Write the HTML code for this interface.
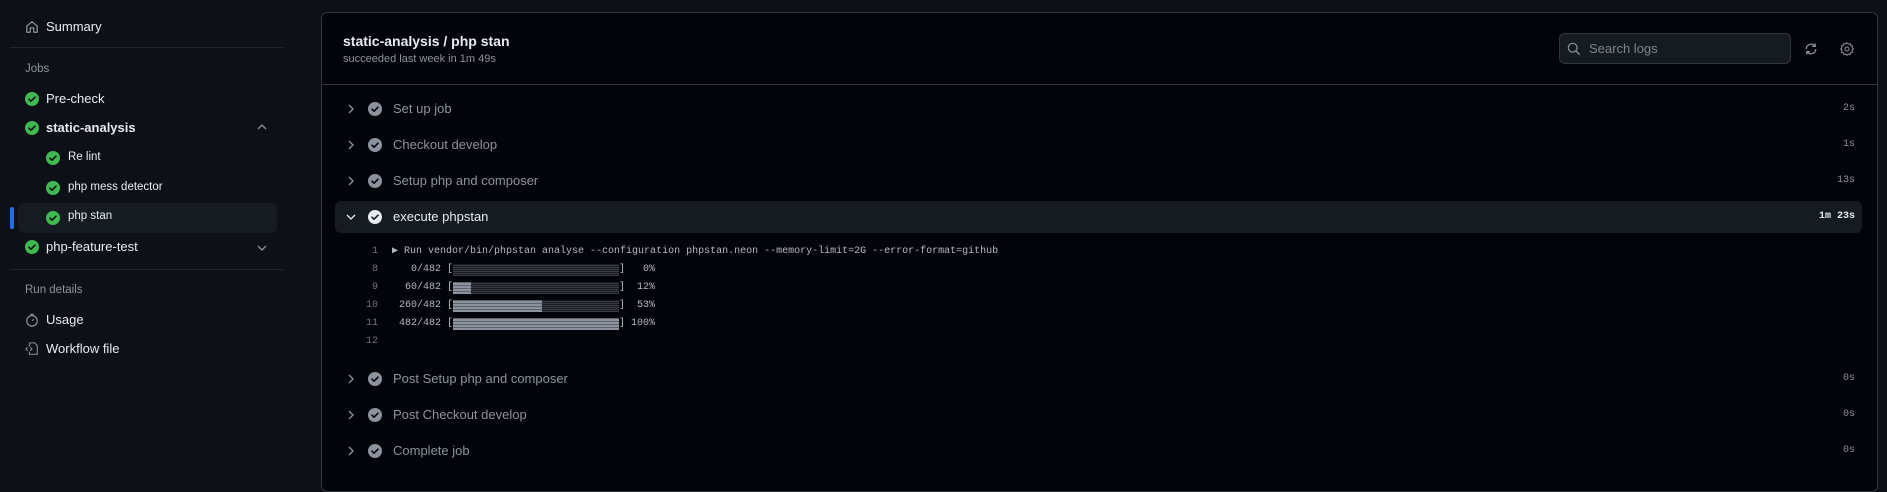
<!DOCTYPE html>
<html><head><meta charset="utf-8"><style>
*{box-sizing:border-box;margin:0;padding:0}
body{width:1887px;height:487px;background:#0d1117;font-family:"Liberation Sans",sans-serif;color:#e6edf3;position:relative;overflow:hidden}
.a{position:absolute;white-space:nowrap}
.sb{font-size:13px;color:#e6edf3}
.sm{font-size:11.5px;color:#8b949e}
.hr{position:absolute;height:1px;background:#21262d}
.panel{position:absolute;left:321px;top:12px;width:1557px;height:480px;background:#010409;border:1px solid #30363d;border-radius:6px}
.step{font-size:13px;color:#8b949e}
.t{font-family:"Liberation Mono","DejaVu Sans Mono",monospace;font-size:10px;color:#8b949e;text-align:right;width:60px}
.log{font-family:"Liberation Mono","DejaVu Sans Mono",monospace;font-size:10px;line-height:12px;color:#b1bac4}
.ln{font-family:"Liberation Mono",monospace;font-size:10px;line-height:12px;color:#6e7681;text-align:right;width:30px}
.bar{position:absolute;height:12px;background:repeating-linear-gradient(0deg,#3a3f45 0 1px,#15181c 1px 2px)}
.fill{position:absolute;height:12px;background:repeating-linear-gradient(0deg,#8b949e 0 2px,#5d646c 2px 3px)}
</style></head><body>
<svg class="a" style="left:25px;top:20px" width="14" height="14" viewBox="0 0 16 16"><path d="M2 7 8 2l6 5v7H10V9H6v5H2z" fill="none" stroke="#8b949e" stroke-width="1.4" stroke-linejoin="round"/></svg>
<div class="a sb" style="left:46px;top:19px">Summary</div>
<div class="hr" style="left:10px;top:47px;width:274px"></div>
<div class="a sm" style="left:25px;top:63px">Jobs</div>
<svg width="0" height="0" style="position:absolute"><defs><g id="ok"><circle cx="7" cy="7" r="7" fill="#3fb950"/><path d="M4 7.2l2 2 4-4" fill="none" stroke="#0d1117" stroke-width="1.6" stroke-linecap="round" stroke-linejoin="round"/></g><g id="gk"><circle cx="7" cy="7" r="7" fill="#8b949e"/><path d="M4 7.2l2 2 4-4" fill="none" stroke="#010409" stroke-width="1.6" stroke-linecap="round" stroke-linejoin="round"/></g><g id="wk"><circle cx="7" cy="7" r="7" fill="#e6edf3"/><path d="M4 7.2l2 2 4-4" fill="none" stroke="#161b22" stroke-width="1.6" stroke-linecap="round" stroke-linejoin="round"/></g></defs></svg>
<svg class="a" style="left:25px;top:92px" width="14" height="14"><use href="#ok"/></svg>
<div class="a sb" style="left:46px;top:91px">Pre-check</div>
<svg class="a" style="left:25px;top:121px" width="14" height="14"><use href="#ok"/></svg>
<div class="a sb" style="left:46px;top:120px;font-weight:bold">static-analysis</div>
<svg class="a" style="left:257px;top:123px" width="10" height="8"><path d="M1 6l4-4 4 4" fill="none" stroke="#8b949e" stroke-width="1.3"/></svg>
<svg class="a" style="left:46px;top:151px" width="14" height="14"><use href="#ok"/></svg>
<div class="a" style="left:68px;top:151px;font-size:11.5px">Re lint</div>
<svg class="a" style="left:46px;top:181px" width="14" height="14"><use href="#ok"/></svg>
<div class="a" style="left:68px;top:181px;font-size:11.5px">php mess detector</div>
<div class="a" style="left:18px;top:203px;width:259px;height:30px;background:#161b22;border-radius:6px"></div>
<div class="a" style="left:10px;top:207px;width:4px;height:22px;background:#1f6feb;border-radius:2px"></div>
<svg class="a" style="left:46px;top:211px" width="14" height="14"><use href="#ok"/></svg>
<div class="a" style="left:68px;top:210px;font-size:11.5px">php stan</div>
<svg class="a" style="left:25px;top:240px" width="14" height="14"><use href="#ok"/></svg>
<div class="a sb" style="left:46px;top:239px">php-feature-test</div>
<svg class="a" style="left:257px;top:244px" width="10" height="8"><path d="M1 2l4 4 4-4" fill="none" stroke="#8b949e" stroke-width="1.3"/></svg>
<div class="hr" style="left:10px;top:269px;width:274px"></div>
<div class="a sm" style="left:25px;top:284px">Run details</div>
<svg class="a" style="left:25px;top:313px" width="14" height="14" viewBox="0 0 16 16"><circle cx="8" cy="9" r="6" fill="none" stroke="#8b949e" stroke-width="1.3"/><path d="M6 1.5h4M8 9l2-2" stroke="#8b949e" stroke-width="1.3"/></svg>
<div class="a sb" style="left:46px;top:312px">Usage</div>
<svg class="a" style="left:25px;top:342px" width="14" height="14" viewBox="0 0 16 16"><path d="M5 1h6l3 3v10H5v-3M5 5V1" fill="none" stroke="#8b949e" stroke-width="1.2"/><path d="M3 6L1 8l2 2M6 6l2 2-2 2" fill="none" stroke="#8b949e" stroke-width="1.2"/></svg>
<div class="a sb" style="left:46px;top:341px">Workflow file</div>

<div class="panel"></div>
<div class="a" style="left:343px;top:33px;font-size:14px;font-weight:bold;color:#e6edf3">static-analysis / php stan</div>
<div class="a" style="left:343px;top:53px;font-size:11px;color:#8b949e">succeeded last week in 1m 49s</div>
<div class="a" style="left:1559px;top:33px;width:232px;height:31px;background:#161b22;border:1px solid #30363d;border-radius:6px"></div>
<svg class="a" style="left:1567px;top:42px" width="14" height="14" viewBox="0 0 16 16"><circle cx="6.5" cy="6.5" r="5" fill="none" stroke="#8b949e" stroke-width="1.4"/><path d="M10.3 10.3L14.5 14.5" stroke="#8b949e" stroke-width="1.5"/></svg>
<div class="a" style="left:1589px;top:41px;font-size:13px;color:#7d8590">Search logs</div>
<svg class="a" style="left:1804px;top:42px" width="14" height="14" viewBox="0 0 16 16"><path d="M2.5 8a5.5 5.5 0 0 1 9.7-3.5M13.5 8a5.5 5.5 0 0 1-9.7 3.5" fill="none" stroke="#8b949e" stroke-width="1.4"/><path d="M12.8 1.5v3.5H9.3M3.2 14.5V11h3.5" fill="none" stroke="#8b949e" stroke-width="1.4"/></svg>
<svg class="a" style="left:1840px;top:42px" width="14" height="14" viewBox="0 0 16 16"><path d="M8 .8l1.5 1.6 2.1-.5.6 2.1 2.1.6-.5 2.1L15.2 8l-1.4 1.5.5 2.1-2.1.6-.6 2.1-2.1-.5L8 15.2l-1.5-1.4-2.1.5-.6-2.1-2.1-.6.5-2.1L.8 8l1.4-1.5-.5-2.1 2.1-.6.6-2.1 2.1.5z" fill="none" stroke="#8b949e" stroke-width="1.2" stroke-linejoin="round"/><circle cx="8" cy="8" r="2.3" fill="none" stroke="#8b949e" stroke-width="1.2"/></svg>
<div class="hr" style="left:322px;top:84px;width:1555px;background:#30363d"></div>

<div class="a" style="left:335px;top:201px;width:1527px;height:32px;background:#161b22;border-radius:6px"></div>

<svg class="a" style="left:347px;top:104px" width="8" height="10"><path d="M2 1l4 4-4 4" fill="none" stroke="#8b949e" stroke-width="1.3"/></svg>
<svg class="a" style="left:368px;top:102px" width="14" height="14"><use href="#gk"/></svg>
<div class="a step" style="left:393px;top:101px">Set up job</div>
<div class="a t" style="left:1795px;top:103px">2s</div>
<svg class="a" style="left:347px;top:140px" width="8" height="10"><path d="M2 1l4 4-4 4" fill="none" stroke="#8b949e" stroke-width="1.3"/></svg>
<svg class="a" style="left:368px;top:138px" width="14" height="14"><use href="#gk"/></svg>
<div class="a step" style="left:393px;top:137px">Checkout develop</div>
<div class="a t" style="left:1795px;top:139px">1s</div>
<svg class="a" style="left:347px;top:176px" width="8" height="10"><path d="M2 1l4 4-4 4" fill="none" stroke="#8b949e" stroke-width="1.3"/></svg>
<svg class="a" style="left:368px;top:174px" width="14" height="14"><use href="#gk"/></svg>
<div class="a step" style="left:393px;top:173px">Setup php and composer</div>
<div class="a t" style="left:1795px;top:175px">13s</div>
<svg class="a" style="left:346px;top:213px" width="10" height="8"><path d="M1 2l4 4 4-4" fill="none" stroke="#e6edf3" stroke-width="1.3"/></svg>
<svg class="a" style="left:368px;top:210px" width="14" height="14"><use href="#wk"/></svg>
<div class="a step" style="left:393px;top:209px;color:#e6edf3">execute phpstan</div>
<div class="a t" style="left:1795px;top:211px;color:#e6edf3;font-weight:bold">1m 23s</div>

<div class="a ln" style="left:348px;top:246px">1</div>
<div class="a log" style="left:392px;top:246px">▶ Run vendor/bin/phpstan analyse --configuration phpstan.neon --memory-limit=2G --error-format=github</div>
<div class="a ln" style="left:348px;top:264px">8</div>
<div class="a log" style="left:399px;top:264px">&nbsp;&nbsp;0/482 [</div><div class="a log" style="left:619px;top:264px">]&nbsp;&nbsp;&nbsp;0%</div>
<div class="bar" style="left:453px;top:264px;width:166px"></div>
<div class="a ln" style="left:348px;top:282px">9</div>
<div class="a log" style="left:399px;top:282px">&nbsp;60/482 [</div><div class="a log" style="left:619px;top:282px">]&nbsp;&nbsp;12%</div>
<div class="bar" style="left:453px;top:282px;width:166px"></div><div class="fill" style="left:453px;top:282px;width:18px"></div>
<div class="a ln" style="left:348px;top:300px">10</div>
<div class="a log" style="left:399px;top:300px">260/482 [</div><div class="a log" style="left:619px;top:300px">]&nbsp;&nbsp;53%</div>
<div class="bar" style="left:453px;top:300px;width:166px"></div><div class="fill" style="left:453px;top:300px;width:89px"></div>
<div class="a ln" style="left:348px;top:318px">11</div>
<div class="a log" style="left:399px;top:318px">482/482 [</div><div class="a log" style="left:619px;top:318px">] 100%</div>
<div class="fill" style="left:453px;top:318px;width:166px"></div>
<div class="a ln" style="left:348px;top:336px">12</div>

<svg class="a" style="left:347px;top:374px" width="8" height="10"><path d="M2 1l4 4-4 4" fill="none" stroke="#8b949e" stroke-width="1.3"/></svg>
<svg class="a" style="left:368px;top:372px" width="14" height="14"><use href="#gk"/></svg>
<div class="a step" style="left:393px;top:371px">Post Setup php and composer</div>
<div class="a t" style="left:1795px;top:373px">0s</div>
<svg class="a" style="left:347px;top:410px" width="8" height="10"><path d="M2 1l4 4-4 4" fill="none" stroke="#8b949e" stroke-width="1.3"/></svg>
<svg class="a" style="left:368px;top:408px" width="14" height="14"><use href="#gk"/></svg>
<div class="a step" style="left:393px;top:407px">Post Checkout develop</div>
<div class="a t" style="left:1795px;top:409px">0s</div>
<svg class="a" style="left:347px;top:446px" width="8" height="10"><path d="M2 1l4 4-4 4" fill="none" stroke="#8b949e" stroke-width="1.3"/></svg>
<svg class="a" style="left:368px;top:444px" width="14" height="14"><use href="#gk"/></svg>
<div class="a step" style="left:393px;top:443px">Complete job</div>
<div class="a t" style="left:1795px;top:445px">0s</div>
</body></html>
